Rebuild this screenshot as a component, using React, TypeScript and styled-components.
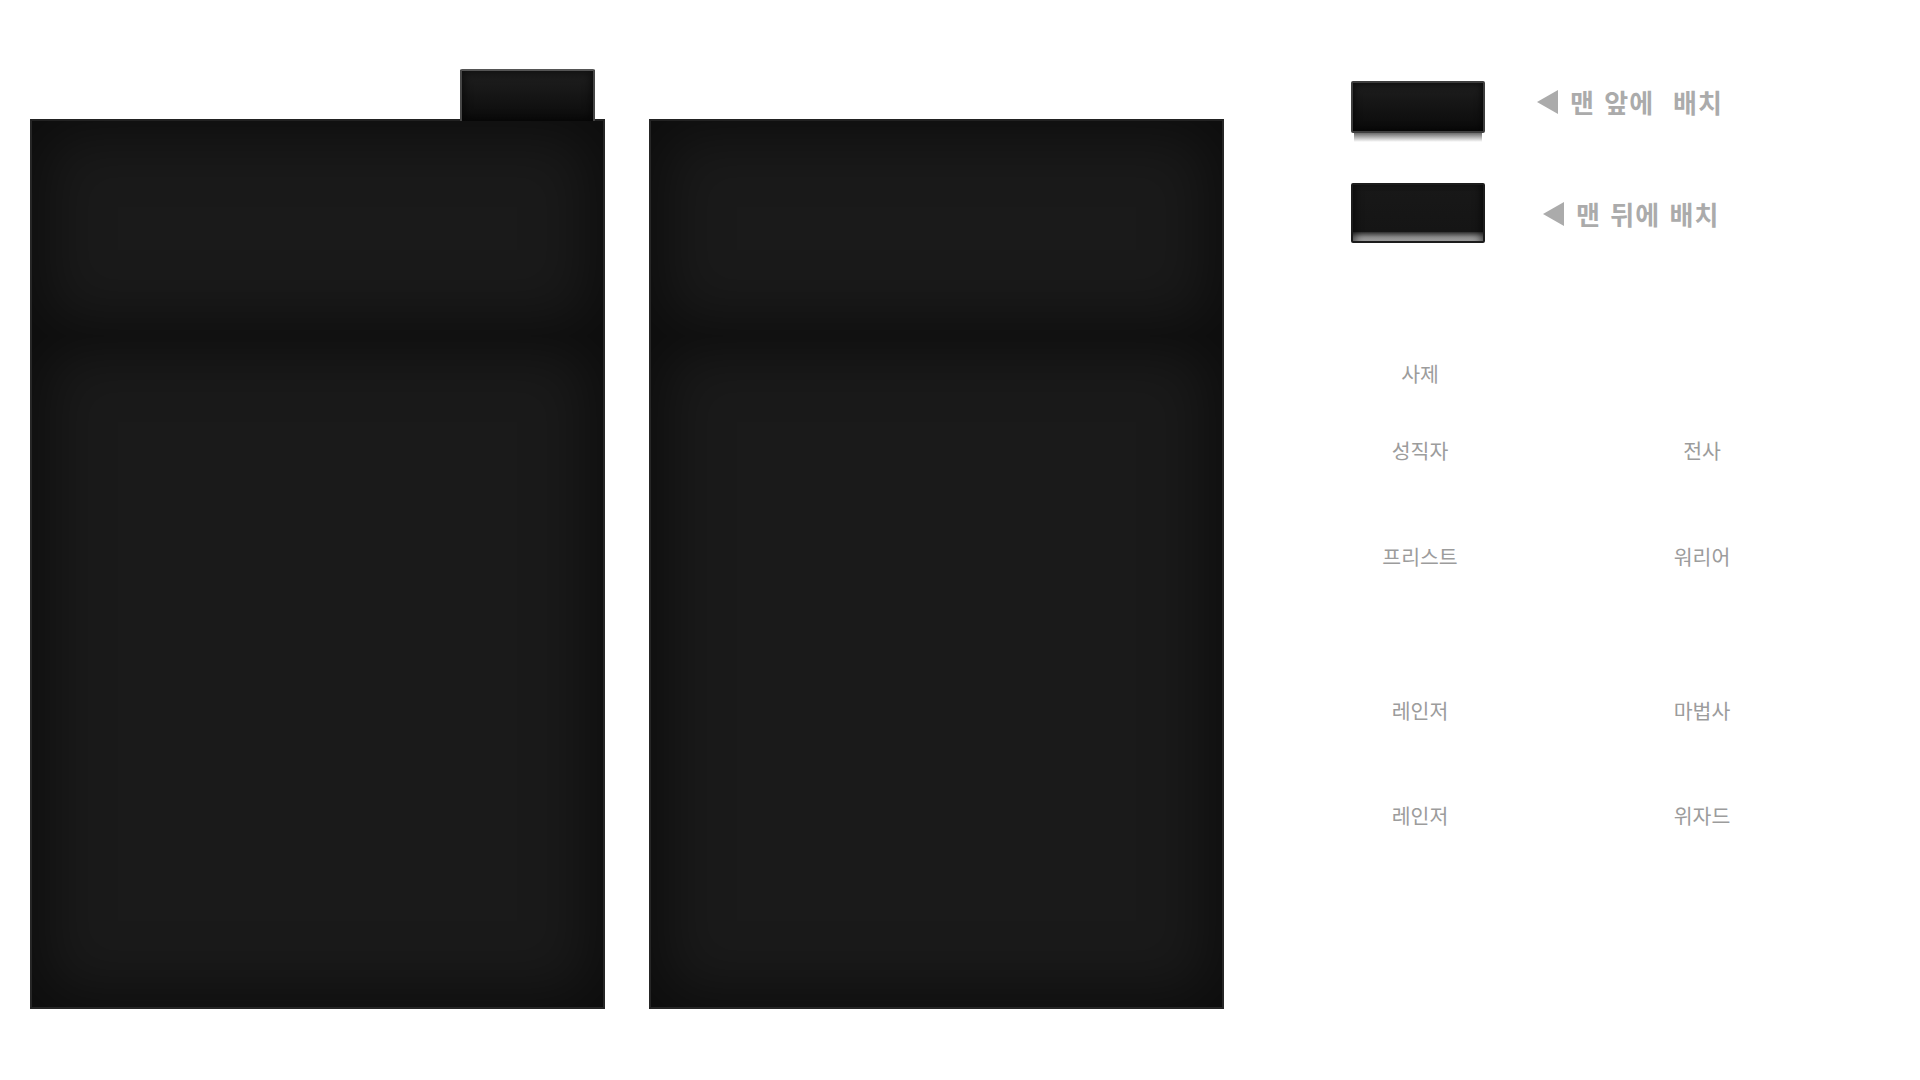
import React from "react";
import styled, { createGlobalStyle } from "styled-components";

const Global = createGlobalStyle`
  html, body { margin: 0; padding: 0; background: #ffffff; }
  body { font-family: "Noto Sans CJK KR", "Noto Sans", sans-serif; }
`;

const Page = styled.div`
  display: flex;
  align-items: flex-start;
  width: 1920px;
  height: 1080px;
  box-sizing: border-box;
  padding: 69px 0 0 30px;
  overflow: hidden;
`;

const Boards = styled.div`
  display: flex;
  align-items: flex-start;
  gap: 44px;
`;

const BoardColumn = styled.div<{ $withTab?: boolean }>`
  display: flex;
  flex-direction: column;
  align-items: flex-end;
  padding-top: ${(p) => (p.$withTab ? 0 : 50)}px;
`;

const Tab = styled.div`
  width: 135px;
  height: 52px;
  box-sizing: border-box;
  margin-right: 10px;
  margin-bottom: -2px;
  border: 2px solid #464646;
  border-top-color: #555555;
  border-bottom: none;
  border-radius: 2px 2px 0 0;
  background: linear-gradient(#1f1f1f, #0b0b0b);
  box-shadow: inset 0 0 8px 2px rgba(0, 0, 0, 0.55);
  z-index: 1;
`;

const Board = styled.div`
  width: 575px;
  height: 890px;
  box-sizing: border-box;
  border: 2px solid #262626;
  border-top-color: #222222;
  display: flex;
  flex-direction: column;
  background: #0e0e0e;
`;

const BoardSection = styled.div<{ $height?: number }>`
  flex: ${(p) => (p.$height ? `0 0 ${p.$height}px` : "1 1 auto")};
  background: #1a1a1a;
  box-shadow: inset 0 0 60px 14px rgba(0, 0, 0, 0.52);
`;

const Side = styled.div`
  display: flex;
  flex-direction: column;
  margin-left: 127px;
  padding-top: 12px;
`;

const ArrangeRow = styled.div<{ $gapTop?: number }>`
  display: flex;
  align-items: flex-start;
  margin-top: ${(p) => p.$gapTop ?? 0}px;
`;

const ButtonStack = styled.div`
  display: flex;
  flex-direction: column;
  align-items: center;
  width: 134px;
`;

const FrontButton = styled.div`
  width: 134px;
  height: 52px;
  box-sizing: border-box;
  border: 2px solid #3d3d3d;
  border-radius: 2px;
  background: linear-gradient(#1e1e1e, #0a0a0a);
  box-shadow: inset 0 0 7px 1px rgba(0, 0, 0, 0.7);
`;

const Reflection = styled.div`
  width: 128px;
  height: 9px;
  background: linear-gradient(#6a6a6a, rgba(255, 255, 255, 0));
`;

const BackButton = styled.div`
  width: 134px;
  height: 60px;
  box-sizing: border-box;
  border: 2px solid #1c1c1c;
  border-radius: 2px;
  background: linear-gradient(
    #181818 0%,
    #151515 83%,
    #3a3a3a 85%,
    #8a8a8a 93%,
    #bdbdbd 100%
  );
  box-shadow: inset 6px 0 8px -4px rgba(0, 0, 0, 0.6),
    inset -6px 0 8px -4px rgba(0, 0, 0, 0.6);
`;

const ArrangeLabel = styled.div<{ $left: number; $top: number }>`
  display: flex;
  align-items: center;
  gap: 12px;
  margin-left: ${(p) => p.$left}px;
  margin-top: ${(p) => p.$top}px;
  height: 30px;
  font-size: 26px;
  font-weight: 700;
  line-height: 30px;
  color: #ababab;
  white-space: pre;
  letter-spacing: 1px;
  word-spacing: 2.5px;
`;

const ClassGrid = styled.div`
  display: grid;
  grid-template-columns: 138px 140px;
  grid-template-rows: 77px 106px 154px 105px 30px;
  column-gap: 143px;
  justify-items: center;
  align-items: start;
  margin-top: 115px;
`;

const ClassName = styled.div`
  font-size: 20.5px;
  line-height: 30px;
  color: #9c9c9c;
  white-space: nowrap;
`;

const Arrow = () => (
  <svg width="21" height="24" viewBox="0 0 21 24">
    <polygon points="21,0 21,24 0,12" fill="#ababab" />
  </svg>
);

const classes = [
  "사제",
  "",
  "성직자",
  "전사",
  "프리스트",
  "워리어",
  "레인저",
  "마법사",
  "레인저",
  "위자드",
];

export default function App() {
  return (
    <>
      <Global />
      <Page>
        <Boards>
          <BoardColumn $withTab>
            <Tab />
            <Board>
              <BoardSection $height={215} />
              <BoardSection />
            </Board>
          </BoardColumn>
          <BoardColumn>
            <Board>
              <BoardSection $height={215} />
              <BoardSection />
            </Board>
          </BoardColumn>
        </Boards>
        <Side>
          <ArrangeRow>
            <ButtonStack>
              <FrontButton />
              <Reflection />
            </ButtonStack>
            <ArrangeLabel $left={52} $top={6}>
              <Arrow />
              <span>{"맨 앞에  배치"}</span>
            </ArrangeLabel>
          </ArrangeRow>
          <ArrangeRow $gapTop={41}>
            <ButtonStack>
              <BackButton />
            </ButtonStack>
            <ArrangeLabel $left={58} $top={16}>
              <Arrow />
              <span>{"맨 뒤에 배치"}</span>
            </ArrangeLabel>
          </ArrangeRow>
          <ClassGrid>
            {classes.map((c, i) => (
              <ClassName key={i}>{c}</ClassName>
            ))}
          </ClassGrid>
        </Side>
      </Page>
    </>
  );
}
